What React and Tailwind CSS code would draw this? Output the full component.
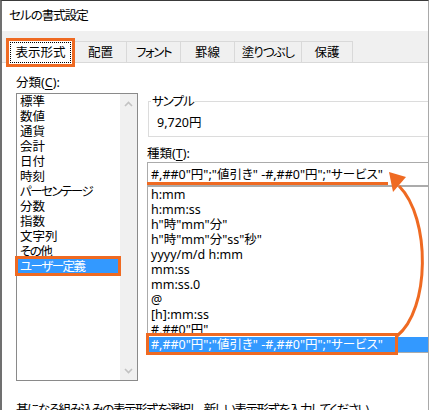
import React from "react";

const leftItems = [
  { t: "標準", k: false },
  { t: "数値", k: false },
  { t: "通貨", k: false },
  { t: "会計", k: false },
  { t: "日付", k: false },
  { t: "時刻", k: false },
  { t: "パーセンテージ", k: true },
  { t: "分数", k: false },
  { t: "指数", k: false },
  { t: "文字列", k: false },
  { t: "その他", k: true },
  { t: "ユーザー定義", k: true },
];
const rightItems = [
  "h:mm",
  "h:mm:ss",
  'h"時"mm"分"',
  'h"時"mm"分"ss"秒"',
  "yyyy/m/d h:mm",
  "mm:ss",
  "mm:ss.0",
  "@",
  "[h]:mm:ss",
  '#,##0"円"',
  '#,##0"円";"値引き" -#,##0"円";"サービス"',
];
const FORMAT = '#,##0"円";"値引き" -#,##0"円";"サービス"';

const tabs = [
  { label: "配置", cls: "w-[52px]" },
  { label: "フォント", cls: "w-[54px] tracking-[-1.5px]" },
  { label: "罫線", cls: "w-[54px]" },
  { label: "塗りつぶし", cls: "w-[67px] tracking-[-1px]" },
  { label: "保護", cls: "w-[51px]" },
];

export default function App() {
  return (
    <div className="relative w-[430px] h-[410px] overflow-hidden bg-white text-[12.5px] leading-[15px] text-black [font-family:'Noto_Sans','Noto_Sans_CJK_JP',sans-serif] [font-feature-settings:'palt']">
      <div className="h-full w-[429px] overflow-hidden border-t border-t-[#3a3a3a] border-l-2 border-l-[#707070] border-r border-r-[#a9a9a9] flex flex-col">
        {/* title */}
        <div className="h-[30px] flex items-center pl-[7px] pb-[2px] shrink-0 tracking-[-1px]">セルの書式設定</div>

        {/* tab strip */}
        <div className="h-[32px] shrink-0 bg-[#f0f0f0] border-b border-b-[#d9d9d9] flex items-end pl-[4px]">
          <div className="relative z-10 w-[69px] h-[29px] -mb-[5px] border-[3px] border-[#ef6a22] bg-white">
            <div className="ml-[1px] mt-[1px] w-[61px] h-[21px] border border-dotted border-black flex items-center justify-center">
              表示形式
            </div>
          </div>
          {tabs.map((t) => (
            <div
              key={t.label}
              className={`${t.cls} h-[21px] border-t border-r border-[#d9d9d9] bg-[#f0f0f0] flex items-center justify-center pt-[1px]`}
            >
              {t.label}
            </div>
          ))}
        </div>

        {/* content */}
        <div className="flex-1 flex flex-col pl-[14px]">
          <div className="flex gap-[9px]">
            {/* left column */}
            <div className="w-[122px] pt-[12px] flex flex-col shrink-0">
              <div className="h-[15px]">
                分類(<span className="underline underline-offset-[2px]">C</span>):
              </div>
              <div className="mt-[3px] h-[288px] border border-[#8a8a8a] flex">
                <div className="flex-1 flex flex-col">
                  {leftItems.map((it, i) =>
                    i === leftItems.length - 1 ? (
                      <div key={it.t} className="relative h-[15px] bg-[#3399ff] text-white pl-[3px] whitespace-nowrap tracking-[-1.5px]">
                        {it.t}
                        <div className="absolute -left-[2px] -top-[3px] -right-[1px] -bottom-[2px] border-[3px] border-[#ef6a22]" />
                      </div>
                    ) : (
                      <div
                        key={it.t}
                        className={it.k ? "h-[15px] pl-[3px] whitespace-nowrap tracking-[-1.5px]" : "h-[15px] pl-[3px] whitespace-nowrap"}
                      >
                        {it.t}
                      </div>
                    )
                  )}
                </div>
                <div className="w-[17px] bg-[#f0f0f0] flex flex-col items-center justify-between pt-[7px] pb-[6px]">
                  <svg width="9" height="6" viewBox="0 0 9 6">
                    <path d="M1 5 L4.5 1.5 L8 5" fill="none" stroke="#c2c2c2" strokeWidth="1.6" />
                  </svg>
                  <svg width="9" height="6" viewBox="0 0 9 6">
                    <path d="M1 1 L4.5 4.5 L8 1" fill="none" stroke="#c2c2c2" strokeWidth="1.6" />
                  </svg>
                </div>
              </div>
            </div>

            {/* right column */}
            <div className="w-[300px] pt-[38px] flex flex-col shrink-0">
              <div className="relative ml-[1px] h-[36px] border border-[#dcdcdc] pl-[8px] pt-[13px]">
                <span className="absolute left-[2px] -top-[8px] bg-white px-[1px] tracking-[-1px]">サンプル</span>
                9,720円
              </div>
              <div className="mt-[9px] h-[15px]">
                種類(<span className="underline underline-offset-[2px]">T</span>):
              </div>
              <div className="relative mt-[1px] h-[24px] border border-[#ababab] pl-[3px] flex items-center whitespace-pre">
                {FORMAT}
                <div className="absolute -left-[1px] bottom-0 w-[241px] h-[3px] bg-[#ef6a22]" />
              </div>
              <div className="h-[167px] border border-[#ababab] flex flex-col">
                {rightItems.map((it, i) =>
                  i === rightItems.length - 1 ? (
                    <div key={i} className="relative h-[15px] bg-[#3399ff] text-white pl-[3px] whitespace-pre">
                      {it}
                      <div className="absolute -left-[2px] -top-[4px] w-[252px] h-[22px] border-[3px] border-[#ef6a22]" />
                    </div>
                  ) : (
                    <div key={i} className="h-[15px] pl-[3px] whitespace-pre">
                      {it}
                    </div>
                  )
                )}
              </div>
            </div>
          </div>
          <div className="mt-[21px] whitespace-nowrap tracking-[-1.4px]">
            基になる組み込みの表示形式を選択し、新しい表示形式を入力してください。
          </div>
        </div>
      </div>

      {/* annotation arrow */}
      <svg className="absolute left-0 top-0 pointer-events-none" width="430" height="410" viewBox="0 0 430 410">
        <path d="M397 336 C430 310, 431 218, 399 186" fill="none" stroke="#ef6a22" strokeWidth="3" />
        <polygon points="389,172 406,177 393,192" fill="#ef6a22" />
      </svg>
    </div>
  );
}
